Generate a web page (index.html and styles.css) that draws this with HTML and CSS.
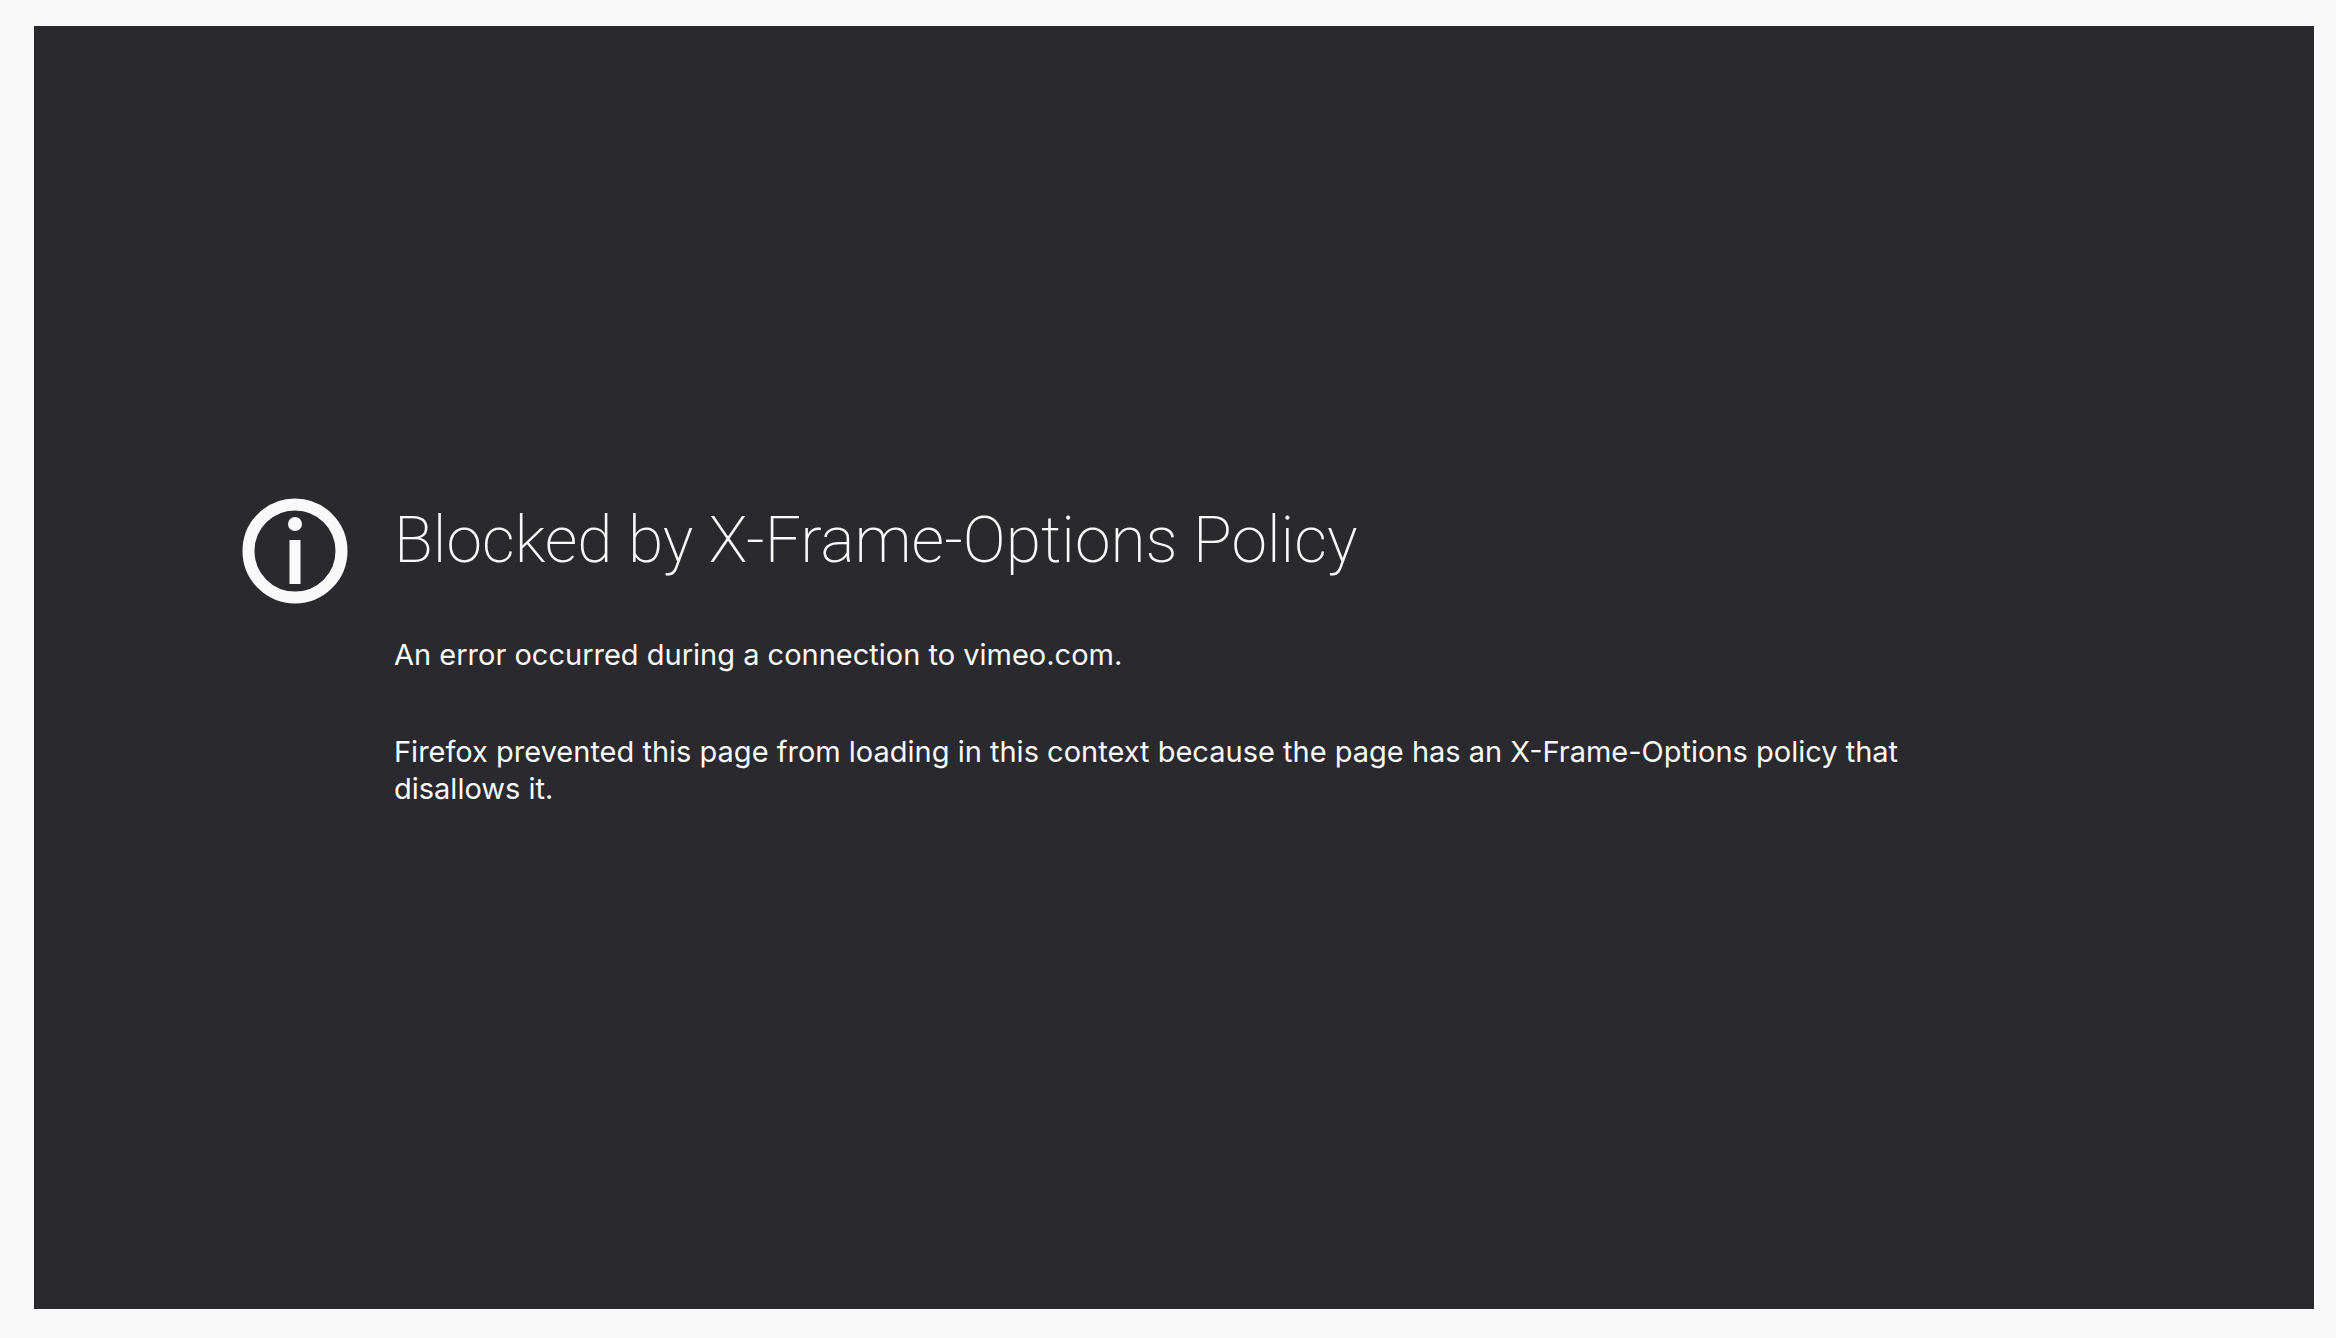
FILE: index.html
```
<!DOCTYPE html>
<html lang="en">
	<head>
		<meta charset="UTF-8">
		<meta name="viewport" content="width=device-width, initial-scale=1.0">
		<title>Blocked by X-Frame-Options Policy</title>
		<link rel="stylesheet" href="styles.css">
	</head>
	<body>
		<main class="error-page">
			<div class="container">
				<svg class="info-icon" viewBox="0 0 106 106" aria-hidden="true">
					<circle cx="53" cy="53" r="46.5" fill="none" stroke="currentColor" stroke-width="12"/>
					<circle cx="53" cy="26" r="7" fill="currentColor"/>
					<rect x="47.5" y="42" width="11" height="44" fill="currentColor"/>
				</svg>
				<div class="text-container">
					<h1>Blocked by X-Frame-Options Policy</h1>
					<p class="short-desc">An error occurred during a connection to vimeo.com.</p>
					<p>Firefox prevented this page from loading in this context because the page has an X-Frame-Options policy that disallows it.</p>
				</div>
			</div>
		</main>
	</body>
</html>
```
FILE: styles.css
```
* {
	box-sizing: border-box;
}
body {
	margin: 0;
	min-height: 100vh;
	padding: 26px 22px 29px 34px;
	display: flex;
	background-color: #f9f9fa;
	font-family: Inter, sans-serif;
}
.error-page {
	flex: 1;
	display: flex;
	align-items: center;
	padding: 0 208px 30px;
	background-color: #2a2a2e;
	color: #f9f9fa;
}
.container {
	display: flex;
	gap: 46px;
}
.info-icon {
	flex: none;
	width: 106px;
	height: 106px;
}
.text-container {
	max-width: 1600px;
}
h1 {
	margin: 0 0 52px;
	font-family: Roboto, sans-serif;
	font-size: 64px;
	font-weight: 200;
	line-height: 86px;
}
p {
	margin: 0;
	font-size: 29px;
	line-height: 37px;
}
.short-desc {
	margin-bottom: 60px;
}
```
